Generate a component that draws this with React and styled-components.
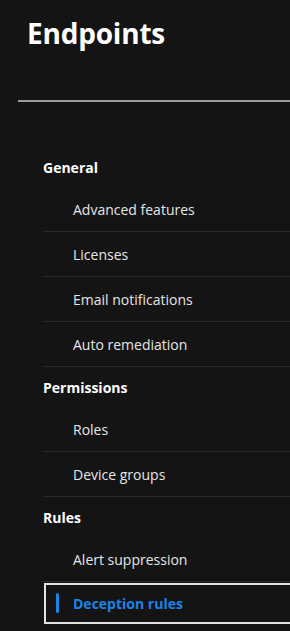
import styled, { createGlobalStyle } from "styled-components";

const GlobalStyle = createGlobalStyle`
  html, body {
    margin: 0;
    padding: 0;
    background: #141414;
  }
  body {
    font-family: "Open Sans", "Noto Sans", sans-serif;
    color: #e8e8e8;
  }
`;

const Page = styled.div`
  width: 290px;
  height: 631px;
  overflow: hidden;
  background: #141414;
`;

const Header = styled.header`
  padding: 14px 0 0 27px;
  height: 100px;
  box-sizing: border-box;
`;

const Title = styled.h1`
  margin: 0;
  font-size: 28px;
  font-weight: 700;
  color: #ffffff;
  letter-spacing: -0.2px;
`;

const Divider = styled.hr`
  margin: 0 0 0 18px;
  border: none;
  height: 2px;
  background: #9a9a9a;
`;

const Nav = styled.nav`
  padding: 45px 0 0 43px;
`;

const GroupTitle = styled.div`
  height: 40px;
  box-sizing: border-box;
  padding-top: 11px;
  font-size: 14px;
  font-weight: 700;
  color: #ffffff;
`;

const Item = styled.a`
  display: flex;
  align-items: center;
  height: 45px;
  box-sizing: border-box;
  padding-left: 30px;
  border-bottom: 1px solid #2b2b2b;
  font-size: 14px;
  color: #e6e6e6;
  text-decoration: none;
`;

const ActiveItem = styled.a`
  position: relative;
  display: flex;
  align-items: center;
  height: 41px;
  margin: 1px -4px 0 1px;
  box-sizing: border-box;
  padding-left: 27px;
  border: 2px solid #e4e4e4;
  font-size: 14px;
  font-weight: 700;
  color: #1a84e8;
  text-decoration: none;

  &::before {
    content: "";
    position: absolute;
    left: 10px;
    top: 8px;
    width: 3px;
    height: 20px;
    border-radius: 2px;
    background: #1a84e8;
  }
`;

const groups = [
  {
    title: "General",
    items: [
      "Advanced features",
      "Licenses",
      "Email notifications",
      "Auto remediation",
    ],
  },
  { title: "Permissions", items: ["Roles", "Device groups"] },
];

export default function App() {
  return (
    <Page>
      <GlobalStyle />
      <Header>
        <Title>Endpoints</Title>
      </Header>
      <Divider />
      <Nav>
        {groups.map((g) => (
          <div key={g.title}>
            <GroupTitle>{g.title}</GroupTitle>
            {g.items.map((it) => (
              <Item key={it} href="#">
                {it}
              </Item>
            ))}
          </div>
        ))}
        <div>
          <GroupTitle>Rules</GroupTitle>
          <Item href="#">Alert suppression</Item>
          <ActiveItem href="#">Deception rules</ActiveItem>
        </div>
      </Nav>
    </Page>
  );
}
